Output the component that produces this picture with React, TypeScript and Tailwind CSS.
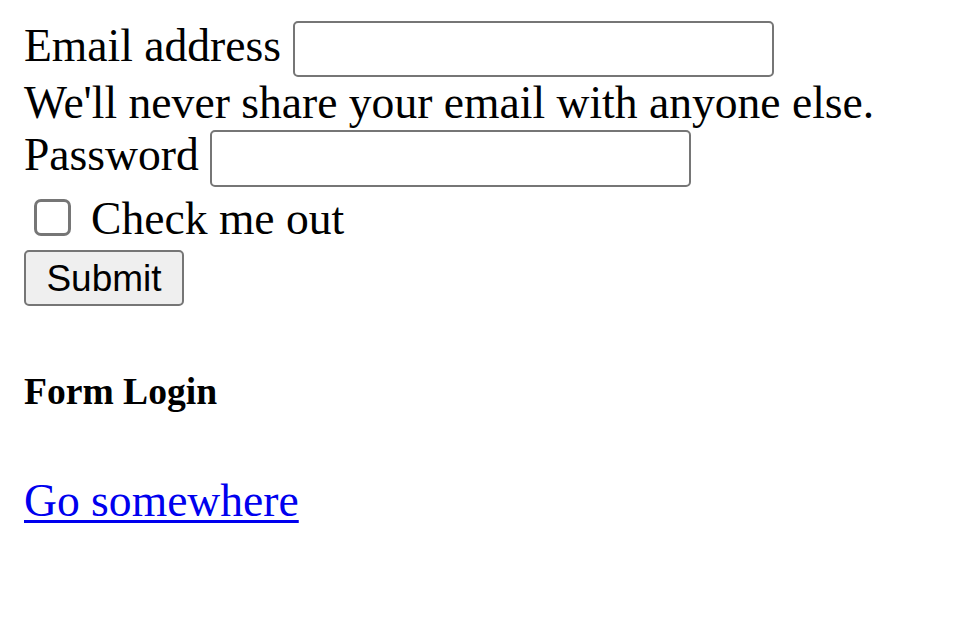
export default function App() {
  return (
    <div className="min-h-screen bg-white px-[24px] pt-[20px] text-black" style={{ fontFamily: '"Liberation Serif", "Times New Roman", serif' }}>
      {/* Email row */}
      <div className="flex items-start">
        <label className="text-[45.6px] leading-[52px]">Email address</label>
        <input
          type="email"
          className="ml-[12px] mt-[1px] h-[56px] w-[481px] rounded-[5px] border-2 border-[#767676] bg-white px-2"
        />
      </div>
      <div className="text-[45.6px] leading-[52px]">We'll never share your email with anyone else.</div>

      {/* Password row */}
      <div className="flex items-start">
        <label className="text-[45.6px] leading-[52px]">Password</label>
        <input
          type="password"
          className="ml-[11px] mt-[1px] h-[57px] w-[481px] rounded-[5px] border-2 border-[#767676] bg-white px-2"
        />
      </div>

      {/* Checkbox row */}
      <div className="mt-[6px] flex items-start">
        <input
          type="checkbox"
          className="ml-[10px] mt-[6px] h-[37px] w-[37px] appearance-none rounded-[7px] border-[3px] border-[#767676] bg-white"
        />
        <label className="ml-[20px] text-[45.6px] leading-[52px]">Check me out</label>
      </div>

      <button
        className="mt-[5px] block h-[56px] w-[160px] rounded-[5px] border-2 border-[#767676] bg-[#efefef] text-[37px] leading-none text-black"
        style={{ fontFamily: '"Liberation Sans", Arial, sans-serif' }}
      >
        Submit
      </button>

      <h5 className="mt-[64px] text-[37.6px] font-bold leading-[43px]">Form Login</h5>

      <a href="#" className="mt-[62px] inline-block text-[45.6px] leading-[52px] text-[#0000ee] underline decoration-[3px] underline-offset-[4px]">
        Go somewhere
      </a>
    </div>
  )
}
